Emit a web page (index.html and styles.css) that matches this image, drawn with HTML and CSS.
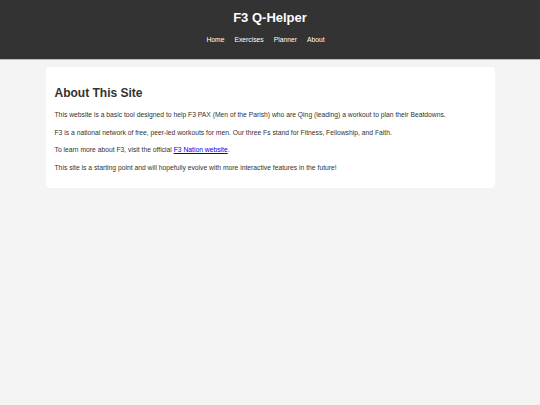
FILE: index.html
```html
<!DOCTYPE html>
<html lang="en">
<head>
<meta charset="utf-8">
<title>F3 Q-Helper</title>
<link rel="stylesheet" href="styles.css">
</head>
<body>
<header class="site-header">
  <h1 class="site-title">F3 Q-Helper</h1>
  <nav class="site-nav">
    <a href="#">Home</a>
    <a href="#">Exercises</a>
    <a href="#">Planner</a>
    <a href="#">About</a>
  </nav>
</header>
<main class="container">
  <section class="card">
    <h2 class="card-title">About This Site</h2>
    <p>This website is a basic tool designed to help F3 PAX (Men of the Parish) who are Qing (leading) a workout to plan their Beatdowns.</p>
    <p>F3 is a national network of free, peer-led workouts for men. Our three Fs stand for Fitness, Fellowship, and Faith.</p>
    <p>To learn more about F3, visit the official <a class="link" href="#">F3 Nation website</a>.</p>
    <p>This site is a starting point and will hopefully evolve with more interactive features in the future!</p>
  </section>
</main>
</body>
</html>
```
FILE: styles.css
```css
html, body {
  margin: 0;
  padding: 0;
}
body {
  background: #f4f4f4;
  font-family: "Liberation Sans", Arial, sans-serif;
  color: #333;
  font-size: 6.75px;
  line-height: 1.5;
}
.site-header {
  background: #333;
  color: #fff;
  text-align: center;
  padding-top: 9px;
  border-bottom: 1px solid #bbb;
  box-sizing: border-box;
  height: 60px;
}
.site-title {
  margin: 0;
  font-size: 13px;
  line-height: 17px;
  font-weight: bold;
}
.site-nav {
  margin-top: 9px;
  display: flex;
  justify-content: center;
  gap: 10px;
  padding-right: 9px;
  font-size: 6.75px;
  line-height: 9px;
}
.site-nav a {
  color: #fff;
  text-decoration: none;
}
.container {
  max-width: 449px;
  margin: 7px auto 0;
}
.card {
  background: #fff;
  border-radius: 4px;
  padding: 10px 9px 8px;
}
.card-title {
  margin: 9px 0 10px;
  font-size: 12px;
  line-height: 14px;
}
.card p {
  margin: 0 0 7px;
  line-height: 10.5px;
}
.link {
  color: #00e;
}
```
